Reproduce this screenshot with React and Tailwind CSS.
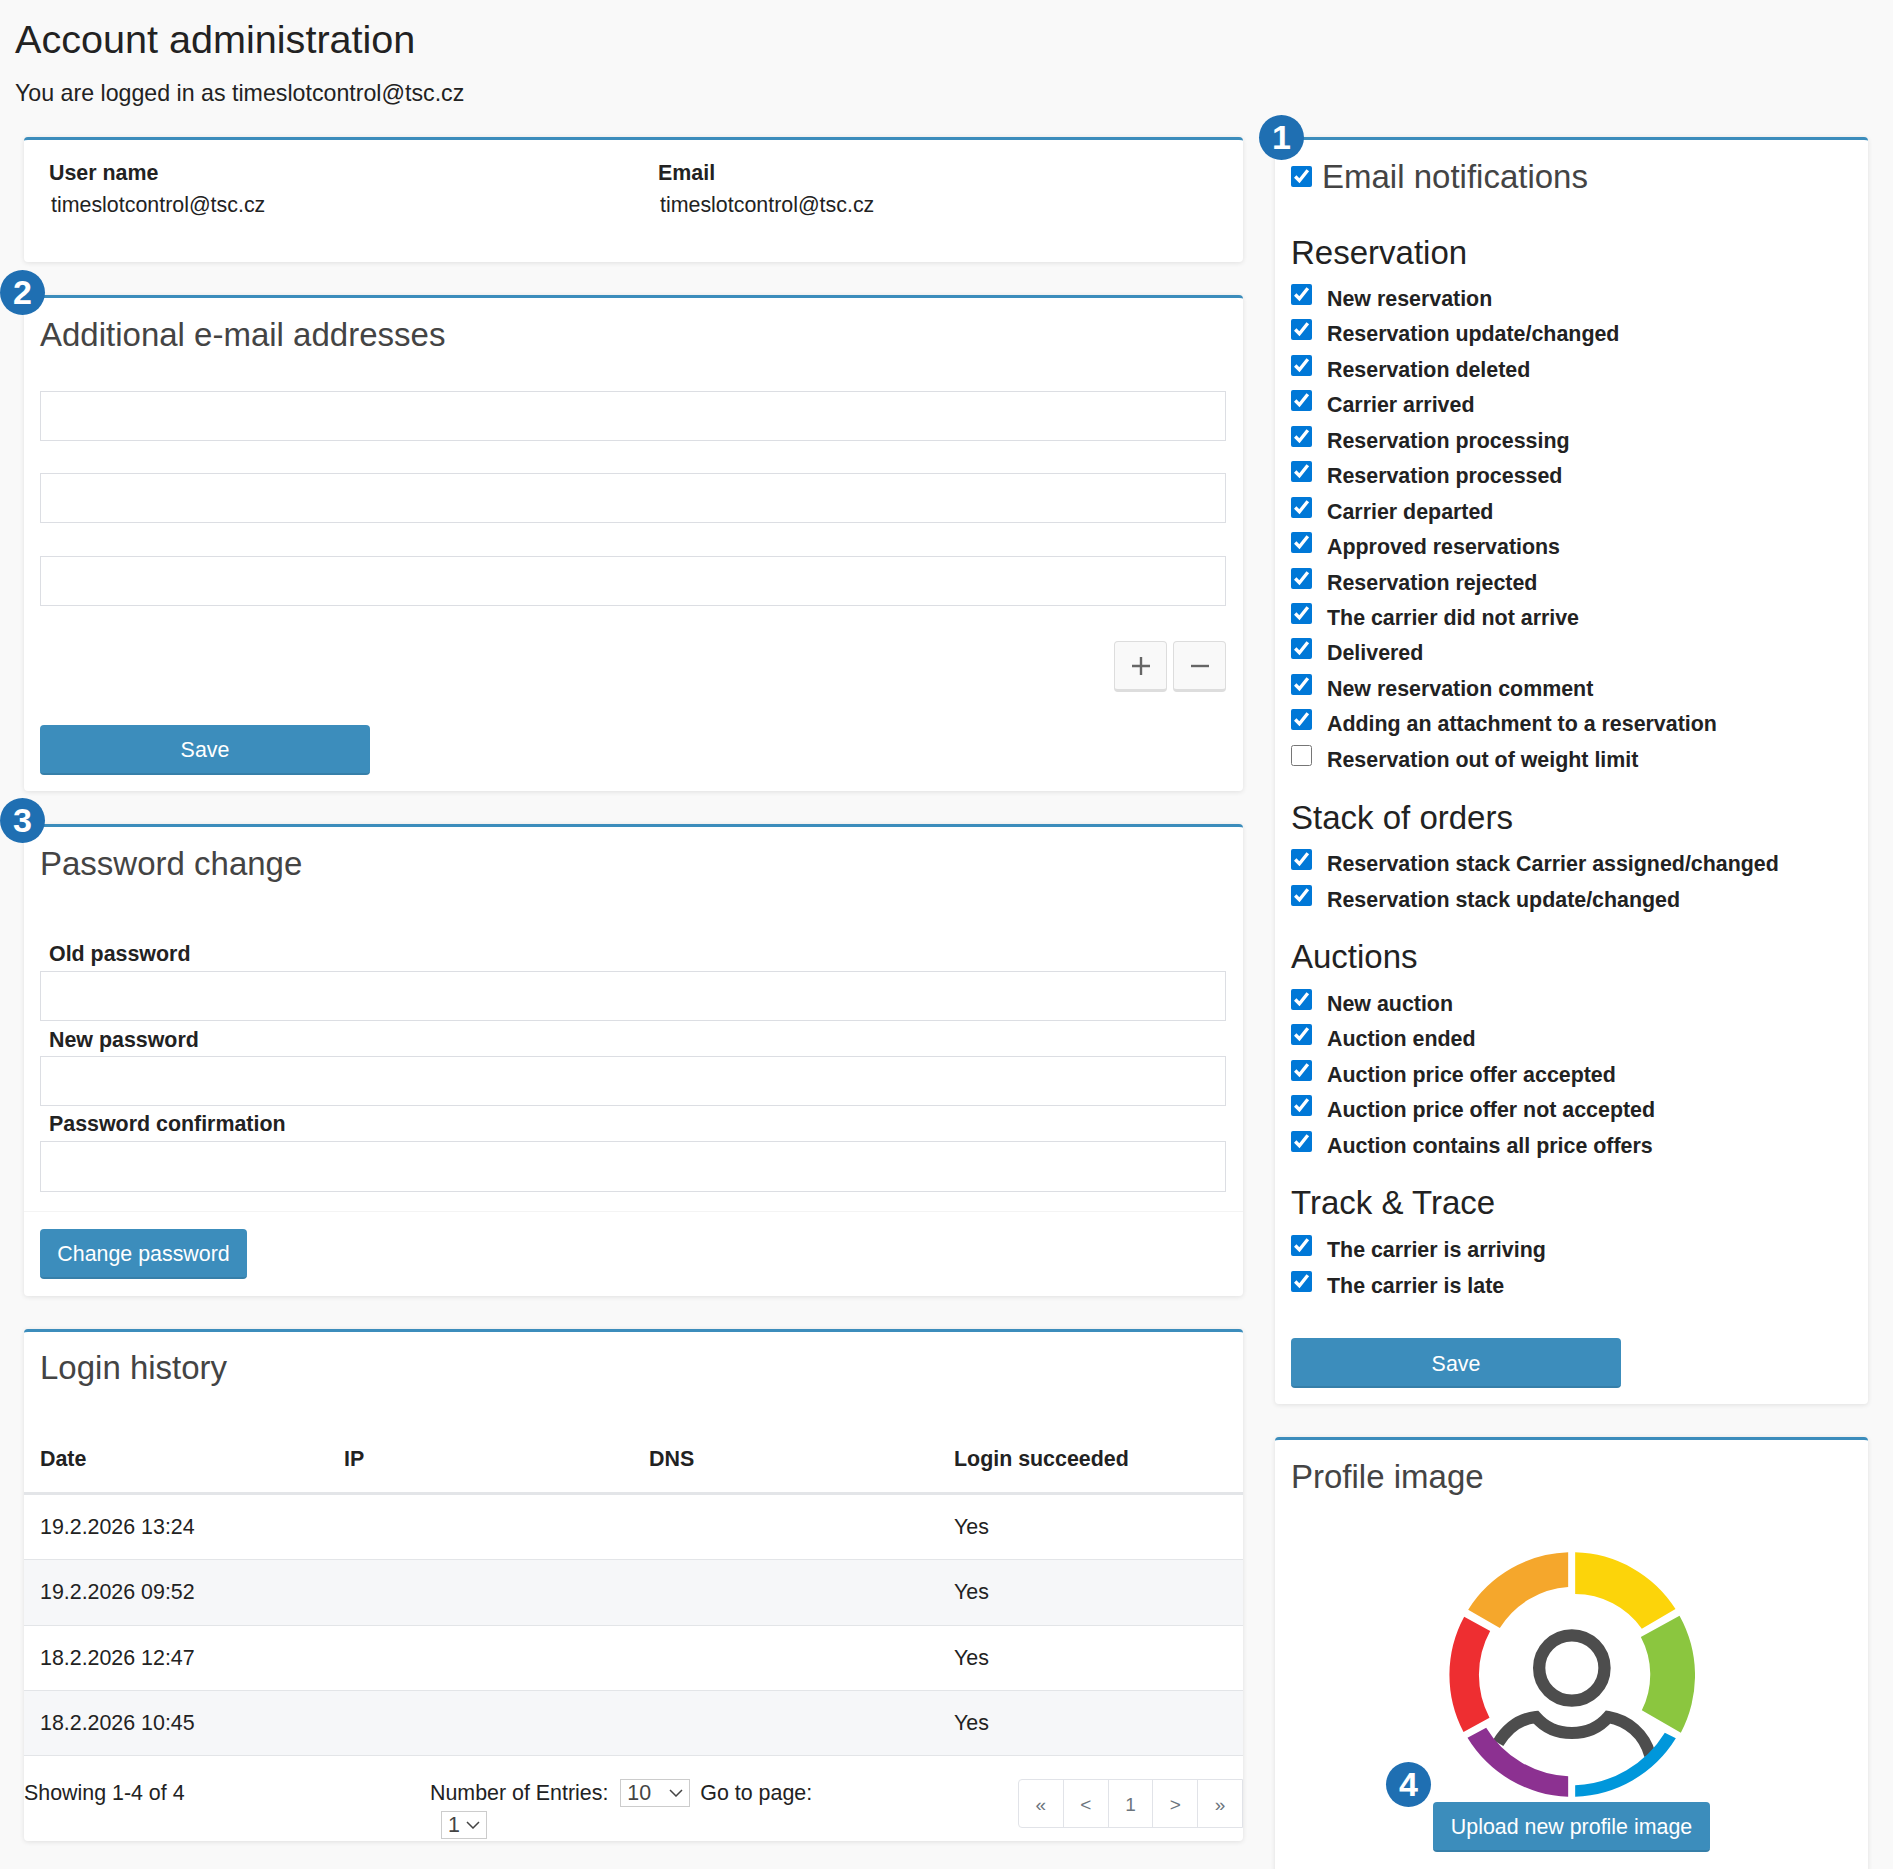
const reservation = [
  ['New reservation', true],
  ['Reservation update/changed', true],
  ['Reservation deleted', true],
  ['Carrier arrived', true],
  ['Reservation processing', true],
  ['Reservation processed', true],
  ['Carrier departed', true],
  ['Approved reservations', true],
  ['Reservation rejected', true],
  ['The carrier did not arrive', true],
  ['Delivered', true],
  ['New reservation comment', true],
  ['Adding an attachment to a reservation', true],
  ['Reservation out of weight limit', false],
];
const stack = ['Reservation stack Carrier assigned/changed', 'Reservation stack update/changed'];
const auctions = [
  'New auction',
  'Auction ended',
  'Auction price offer accepted',
  'Auction price offer not accepted',
  'Auction contains all price offers',
];
const trace = ['The carrier is arriving', 'The carrier is late'];
const logins = ['19.2.2026 13:24', '19.2.2026 09:52', '18.2.2026 12:47', '18.2.2026 10:45'];

function Card({ children, className = '' }) {
  return (
    <div className={`relative rounded-[4px] border-t-[3px] border-[#3c8dbc] bg-white shadow-[0_1px_5px_rgba(0,0,0,0.1)] ${className}`}>
      {children}
    </div>
  );
}

function Step({ n, className = '' }) {
  return (
    <div className={`absolute z-10 flex h-[45px] w-[45px] items-center justify-center rounded-full bg-[#1f6fb2] text-[34px] font-bold text-white ${className}`}>
      {n}
    </div>
  );
}

function Title({ children, className = '' }) {
  return <h2 className={`text-[33px] leading-[36px] text-[#444] ${className}`}>{children}</h2>;
}

function TextInput({ className = '' }) {
  return <input className={`block h-[50px] w-full border border-[#dcdee3] bg-white outline-none ${className}`} />;
}

function PrimaryButton({ children, className = '' }) {
  return (
    <button className={`h-[50px] rounded-[4px] border-b-2 border-[#367fa9] bg-[#3c8dbc] pt-[3px] text-center text-[21.4px] text-white ${className}`}>
      {children}
    </button>
  );
}

function SquareButton({ children }) {
  return (
    <button className="flex h-[51px] w-[53px] items-center justify-center rounded-[4px] border border-b-[3px] border-[#dddddd] bg-[#f9f9f9] text-[#666]">
      {children}
    </button>
  );
}

function Check({ label, checked = true }) {
  return (
    <label className="flex h-[35.45px] items-start">
      <input type="checkbox" defaultChecked={checked} className="m-0 mt-[1px] h-[21px] w-[21px] accent-[#0078d7]" />
      <span className="ml-[15px] mt-[3px] text-[21.4px] leading-[26px] font-bold text-[#222]">{label}</span>
    </label>
  );
}

function Group({ title, className = '', listClassName = 'mt-[12px]', children }) {
  return (
    <div className={className}>
      <h3 className="text-[33px] leading-[36px] text-[#222]">{title}</h3>
      <div className={listClassName}>{children}</div>
    </div>
  );
}

function FieldLabel({ children }) {
  return <div className="mb-[3.5px] pl-[9px] text-[21.4px] leading-[26px] font-bold text-[#222]">{children}</div>;
}

function Logo() {
  return (
    <svg viewBox="265 155 737 735" className="h-[245px] w-[246px]">
      <circle cx="633" cy="503" r="98" fill="none" stroke="#4d4d4d" strokeWidth="37" />
      <path
        d="M412 728C440 682 480 655 525 650C555 685 590 698 633 698C676 698 712 685 742 650C800 660 850 700 868 765"
        fill="none"
        stroke="#4d4d4d"
        strokeWidth="36"
      />
      <path d="M622 156A368 368 0 0 0 322 328L417 383A262 262 0 0 1 622 260Z" fill="#f5a72c" />
      <path d="M643 156A368 368 0 0 1 944 326L843 385A245 245 0 0 0 643 281Z" fill="#fcd40a" />
      <path d="M956 346A368 368 0 0 1 960 697L843 630A240 240 0 0 0 840 410Z" fill="#8bc63f" />
      <path d="M310 349A368 368 0 0 0 308 695L386 652A275 275 0 0 1 388 392Z" fill="#ee2e31" />
      <path d="M320 712A368 368 0 0 0 622 889L622 828A305 305 0 0 1 376 682Z" fill="#8c3191" />
      <path d="M643 889A368 368 0 0 0 945 714L912 697A333 333 0 0 1 643 855Z" fill="#0097db" />
    </svg>
  );
}

function Chevron() {
  return (
    <svg viewBox="0 0 14 8" className="h-[8px] w-[14px] shrink-0">
      <path d="M1 1L7 7L13 1" fill="none" stroke="#444" strokeWidth="1.5" />
    </svg>
  );
}

function FakeSelect({ value, className = '' }) {
  return (
    <div className={`flex h-[28px] items-center justify-between border border-[#cccccc] bg-white px-[6px] text-[21.4px] text-[#444] ${className}`}>
      <span>{value}</span>
      <Chevron />
    </div>
  );
}

export default function App() {
  return (
    <div className="h-[1869px] overflow-hidden bg-[#f9f9f9] font-['Liberation_Sans',Arial,sans-serif] text-[#222]">
      <div className="px-[15px] pt-[15px]">
        <h1 className="text-[39.6px] leading-[48px] text-[#222]">Account administration</h1>
        <p className="mt-[17px] text-[23.2px] leading-[26px]">You are logged in as timeslotcontrol@tsc.cz</p>
      </div>

      <div className="mt-[31px] flex items-start gap-[32px] px-[24px]">
        <div className="flex w-[1219px] flex-col gap-[33px]">
          <Card className="h-[125px]">
            <div className="flex pt-[20px] pl-[25px]">
              <div className="w-[609px]">
                <div className="text-[21.4px] leading-[26px] font-bold">User name</div>
                <div className="mt-[6px] pl-[2px] text-[21.4px] leading-[26px]">timeslotcontrol@tsc.cz</div>
              </div>
              <div>
                <div className="text-[21.4px] leading-[26px] font-bold">Email</div>
                <div className="mt-[6px] pl-[2px] text-[21.4px] leading-[26px]">timeslotcontrol@tsc.cz</div>
              </div>
            </div>
          </Card>

          <Card className="h-[496px] pr-[17px] pl-[16px] pt-[19px]">
            <Step n="2" className="-top-[28px] -left-[24px]" />
            <Title>Additional e-mail addresses</Title>
            <div className="mt-[38px] flex flex-col gap-[32px]">
              <TextInput />
              <TextInput />
              <TextInput className="mt-px" />
            </div>
            <div className="mt-[35px] flex justify-end gap-[6px]">
              <SquareButton>
                <svg viewBox="0 0 18 18" className="h-[18px] w-[18px]">
                  <path d="M0 9H18M9 0V18" stroke="#666" strokeWidth="2.4" />
                </svg>
              </SquareButton>
              <SquareButton>
                <svg viewBox="0 0 18 18" className="h-[18px] w-[18px]">
                  <path d="M0 9H18" stroke="#666" strokeWidth="2.4" />
                </svg>
              </SquareButton>
            </div>
            <PrimaryButton className="mt-[33px] w-[330px]">Save</PrimaryButton>
          </Card>

          <Card className="h-[472px] pr-[17px] pl-[16px] pt-[19px]">
            <Step n="3" className="-top-[29px] -left-[24px]" />
            <Title>Password change</Title>
            <div className="mt-[59px]">
              <FieldLabel>Old password</FieldLabel>
              <TextInput />
              <div className="mt-[6px]">
                <FieldLabel>New password</FieldLabel>
                <TextInput />
              </div>
              <div className="mt-[5px]">
                <FieldLabel>Password confirmation</FieldLabel>
                <TextInput className="h-[51px]" />
              </div>
            </div>
            <div className="-mr-[17px] -ml-[16px] mt-[19px] border-t border-[#f4f4f4] px-[16px] pt-[17px]">
              <PrimaryButton className="w-[207px]">Change password</PrimaryButton>
            </div>
          </Card>

          <Card className="h-[512px]">
            <Title className="pt-[18px] pl-[16px]">Login history</Title>
            <div className="mt-[60px] flex h-[49px] items-start border-b-[3px] border-[#e3e5e8] text-[21.4px] leading-[26px] font-bold">
              <div className="w-[320px] pl-[16px]">Date</div>
              <div className="w-[305px]">IP</div>
              <div className="w-[305px]">DNS</div>
              <div>Login succeeded</div>
            </div>
            {logins.map((d, i) => (
              <div
                key={d}
                className={`flex h-[65.3px] items-center border-b border-[#e3e5e8] text-[21.4px] last:border-b-0 ${i % 2 ? 'bg-[#f6f7f9]' : 'bg-white'}`}
              >
                <div className="w-[930px] pl-[16px]">{d}</div>
                <div>Yes</div>
              </div>
            ))}
            <div className="flex items-start pt-[23px]">
              <div className="w-[406px] text-[21.4px] leading-[28px]">Showing 1-4 of 4</div>
              <div className="w-[588px]">
                <div className="flex h-[28px] items-center text-[21.4px]">
                  <span>Number of Entries:</span>
                  <FakeSelect value="10" className="ml-[12px] w-[70px]" />
                  <span className="ml-[10px]">Go to page:</span>
                </div>
                <FakeSelect value="1" className="mt-[4px] ml-[11px] w-[46px]" />
              </div>
              <div className="flex h-[49px] w-[225px] rounded-l-[4px] border border-[#e1e3e8] text-[19px] text-[#6c757d]">
                {['«', '<', '1', '>', '»'].map((p, i) => (
                  <div key={i} className="flex flex-1 items-center justify-center border-l border-[#e1e3e8] pt-[3px] first:border-l-0">
                    {p}
                  </div>
                ))}
              </div>
            </div>
          </Card>
        </div>

        <div className="flex w-[593px] flex-col gap-[33px]">
          <Card className="h-[1267px] px-[16px] pt-[19px]">
            <Step n="1" className="-top-[25px] -left-[16px]" />
            <div className="flex items-center">
              <input type="checkbox" defaultChecked className="m-0 -mt-[1px] h-[21px] w-[21px] accent-[#0078d7]" />
              <span className="ml-[10px] text-[33px] leading-[36px] text-[#444]">Email notifications</span>
            </div>
            <Group title="Reservation" className="mt-[40px]">
              {reservation.map(([label, checked]) => (
                <Check key={label} label={label} checked={checked} />
              ))}
            </Group>
            <Group title="Stack of orders" className="mt-[21px]">
              {stack.map((label) => (
                <Check key={label} label={label} />
              ))}
            </Group>
            <Group title="Auctions" className="mt-[20px]" listClassName="mt-[13px]">
              {auctions.map((label) => (
                <Check key={label} label={label} />
              ))}
            </Group>
            <Group title="Track & Trace" className="mt-[20px]" listClassName="mt-[13px]">
              {trace.map((label) => (
                <Check key={label} label={label} />
              ))}
            </Group>
            <PrimaryButton className="mt-[33px] w-[330px]">Save</PrimaryButton>
          </Card>

          <Card className="h-[460px] px-[16px] pt-[19px]">
            <Title>Profile image</Title>
            <div className="mt-[57px] flex flex-col items-center">
              <Logo />
              <PrimaryButton className="mt-[5px] w-[277px]">Upload new profile image</PrimaryButton>
            </div>
            <Step n="4" className="top-[322px] left-[111px]" />
          </Card>
        </div>
      </div>
    </div>
  );
}
